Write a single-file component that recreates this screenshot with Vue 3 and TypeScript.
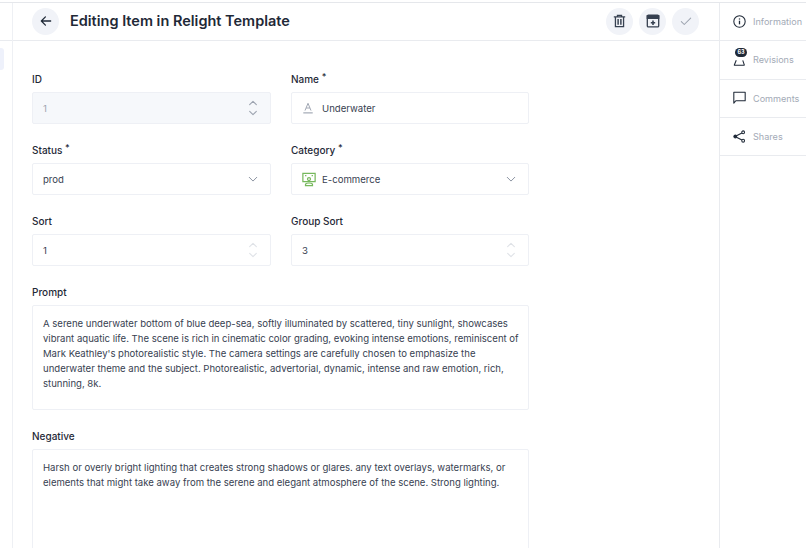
<template>
  <div class="page">
    <aside class="rail">
      <div class="rail-head"></div>
      <span class="rail-tab"></span>
    </aside>

    <main class="main">
      <header class="topbar">
        <button class="round-btn" aria-label="Back">
          <svg viewBox="0 0 24 24" width="14" height="14" fill="none" stroke="#1f2937" stroke-width="2.2" stroke-linecap="round" stroke-linejoin="round">
            <path d="M20 12H4M11 5l-7 7 7 7" />
          </svg>
        </button>
        <h1 class="title">Editing Item in Relight Template</h1>
        <div class="actions">
          <button class="round-btn" aria-label="Delete">
            <svg viewBox="0 0 16 16" width="13" height="14" fill="none" stroke="#374151" stroke-width="1.6">
              <path d="M1 3h14M5.500 3V1h5v2M3 3v12h10V3" />
              <path d="M6.300 5.500v7M9.700 5.500v7" stroke-width="1.800" />
            </svg>
          </button>
          <button class="round-btn" aria-label="Save">
            <svg viewBox="0 0 16 16" width="14" height="14" fill="none" stroke="#374151" stroke-width="1.500">
              <rect x="1.500" y="1.200" width="13" height="13.600" rx="1.200" />
              <path d="M1.500 2h13v3h-13z" fill="#374151" />
              <path d="M8 7.500v5M5.500 10h5" stroke-width="1.800" />
            </svg>
          </button>
          <button class="round-btn" aria-label="Confirm">
            <svg viewBox="0 0 24 24" width="14" height="14" fill="none" stroke="#9ca3af" stroke-width="1.800" stroke-linecap="round" stroke-linejoin="round">
              <path d="M4 13l5 5L20 7" />
            </svg>
          </button>
        </div>
      </header>

      <form class="form" @submit.prevent>
        <div class="field">
          <label>ID</label>
          <div class="control disabled">
            <span class="value">1</span>
            <svg viewBox="0 0 12 20" width="10" height="18" fill="none" stroke="#9ca3af" stroke-width="1.300" stroke-linecap="round" stroke-linejoin="round">
              <path d="M2 6l4-4 4 4M2 14l4 4 4-4" />
            </svg>
          </div>
        </div>
        <div class="field">
          <label>Name <sup>*</sup></label>
          <div class="control">
            <svg class="lead" viewBox="0 0 14 14" width="12" height="12" fill="none" stroke="#9ca3af" stroke-width="1.100">
              <path d="M3.500 10L7 1.500 10.500 10M4.800 7h4.400" />
              <path d="M1.500 12.700h11" stroke-width="1.300" />
            </svg>
            <span class="value">Underwater</span>
          </div>
        </div>

        <div class="field">
          <label>Status <sup>*</sup></label>
          <div class="control">
            <span class="value">prod</span>
            <svg viewBox="0 0 12 12" width="10" height="10" fill="none" stroke="#8b93a1" stroke-width="1.200" stroke-linecap="round" stroke-linejoin="round">
              <path d="M1.500 4l4.500 4.500L10.500 4" />
            </svg>
          </div>
        </div>
        <div class="field">
          <label>Category <sup>*</sup></label>
          <div class="control">
            <svg class="lead-cat" viewBox="0 0 16 16" width="14" height="15" fill="none" stroke="#76b85c" stroke-width="1.400">
              <path d="M1 1h14v9.500H1z" />
              <circle cx="8" cy="7.500" r="1.700" />
              <path d="M4 15v-1.200c0-1 1-1.800 4-1.800s4 .8 4 1.800V15z" />
              <path d="M3.500 3.500h1.500M11 3.500h1.500" />
            </svg>
            <span class="value">E-commerce</span>
            <svg viewBox="0 0 12 12" width="10" height="10" fill="none" stroke="#8b93a1" stroke-width="1.200" stroke-linecap="round" stroke-linejoin="round">
              <path d="M1.500 4l4.500 4.500L10.500 4" />
            </svg>
          </div>
        </div>

        <div class="field">
          <label>Sort</label>
          <div class="control">
            <span class="value">1</span>
            <svg viewBox="0 0 12 20" width="10" height="18" fill="none" stroke="#dfe2e7" stroke-width="1.300" stroke-linecap="round" stroke-linejoin="round">
              <path d="M2 6l4-4 4 4M2 14l4 4 4-4" />
            </svg>
          </div>
        </div>
        <div class="field">
          <label>Group Sort</label>
          <div class="control">
            <span class="value">3</span>
            <svg viewBox="0 0 12 20" width="10" height="18" fill="none" stroke="#dfe2e7" stroke-width="1.300" stroke-linecap="round" stroke-linejoin="round">
              <path d="M2 6l4-4 4 4M2 14l4 4 4-4" />
            </svg>
          </div>
        </div>

        <div class="field wide">
          <label>Prompt</label>
          <div class="area">{{ prompt }}</div>
        </div>
        <div class="field wide">
          <label>Negative</label>
          <div class="area tall">{{ negative }}</div>
        </div>
      </form>
    </main>

    <nav class="side">
      <div v-for="tab in tabs" :key="tab.label" class="side-row">
        <span class="side-icon">
          <svg v-if="tab.icon === 'info'" viewBox="0 0 16 16" width="13" height="13" fill="none" stroke="#1f2937" stroke-width="1.300">
            <circle cx="8" cy="8" r="7" />
            <path d="M8 7v4.500" stroke-width="1.600" />
            <path d="M8 4.200v1.400" stroke-width="1.600" />
          </svg>
          <svg v-else-if="tab.icon === 'rev'" viewBox="0 0 16 16" width="13" height="13" fill="none" stroke="#1f2937" stroke-width="1.300">
            <path d="M1 15h13.500M1.500 15L4 9M12 9l2 6" />
          </svg>
          <svg v-else-if="tab.icon === 'chat'" viewBox="0 0 16 16" width="13" height="13" fill="none" stroke="#1f2937" stroke-width="1.300">
            <path d="M1 15V1.500h14V12H3.500L1 15z" stroke-linejoin="round" />
          </svg>
          <svg v-else viewBox="0 0 16 16" width="13" height="13" fill="none" stroke="#1f2937" stroke-width="1.300">
            <circle cx="12.500" cy="2.800" r="1.700" />
            <circle cx="12.500" cy="13.200" r="1.700" />
            <circle cx="2.800" cy="8" r="1.700" fill="#1f2937" />
            <path d="M4.300 7.100l6.700-3.500M4.300 8.900l6.700 3.500" />
          </svg>
          <span v-if="tab.badge" class="badge">{{ tab.badge }}</span>
        </span>
        <span class="side-label">{{ tab.label }}</span>
      </div>
    </nav>
  </div>
</template>

<script setup lang="ts">
interface SideTab {
  label: string
  icon: string
  badge?: string
}

const tabs: SideTab[] = [
  { label: 'Information', icon: 'info' },
  { label: 'Revisions', icon: 'rev', badge: '63' },
  { label: 'Comments', icon: 'chat' },
  { label: 'Shares', icon: 'share' },
]

const prompt =
  "A serene underwater bottom of blue deep-sea, softly illuminated by scattered, tiny sunlight, showcases vibrant aquatic life. The scene is rich in cinematic color grading, evoking intense emotions, reminiscent of Mark Keathley's photorealistic style. The camera settings are carefully chosen to emphasize the underwater theme and the subject. Photorealistic, advertorial, dynamic, intense and raw emotion, rich, stunning, 8k."

const negative =
  'Harsh or overly bright lighting that creates strong shadows or glares. any text overlays, watermarks, or elements that might take away from the serene and elegant atmosphere of the scene. Strong lighting.'
</script>

<style>
html,
body {
  margin: 0;
  background: #fff;
  overflow: hidden;
}
</style>

<style scoped>
.page {
  display: flex;
  width: 806px;
  height: 546px;
  margin-top: 2px;
  box-sizing: border-box;
  border-top: 1px solid #e5e7eb;
  font-family: Inter, 'Liberation Sans', sans-serif;
  color: #374151;
  overflow: hidden;
}
.rail {
  width: 13px;
  flex: none;
  box-sizing: border-box;
  border-right: 1px solid #eef0f4;
}
.rail-head {
  height: 37px;
  border-bottom: 1px solid #e9ebef;
  margin-bottom: 7px;
}
.rail-tab {
  display: block;
  width: 4px;
  height: 22px;
  background: #eef1fb;
  border-radius: 0 3px 3px 0;
}
.main {
  flex: 1;
  min-width: 0;
}
.topbar {
  height: 38px;
  box-sizing: border-box;
  display: flex;
  align-items: center;
  padding: 0 20px 1px 19px;
  border-bottom: 1px solid #e9ebef;
}
.round-btn {
  width: 27px;
  height: 27px;
  border: 0;
  padding: 0;
  border-radius: 50%;
  background: #f1f3f8;
  display: flex;
  align-items: center;
  justify-content: center;
}
.title {
  margin: 0 0 0 11px;
  font-size: 14.5px;
  line-height: 20px;
  font-weight: 600;
  color: #1f2937;
}
.actions {
  margin-left: auto;
  display: flex;
  gap: 6px;
}
.form {
  display: grid;
  grid-template-columns: 239px 238px;
  column-gap: 20px;
  row-gap: 19px;
  padding: 31px 0 0 19px;
}
.field label {
  display: block;
  font-size: 10px;
  line-height: 14px;
  font-weight: 500;
  color: #1f2937;
  margin-bottom: 6px;
}
.field sup {
  font-size: 9px;
  line-height: 0;
  vertical-align: 3px;
}
.control {
  height: 32px;
  box-sizing: border-box;
  display: flex;
  align-items: center;
  padding: 0 12px 0 10px;
  border: 1px solid #eef0f5;
  border-radius: 2px;
  font-size: 9.6px;
  color: #374151;
}
.control.disabled {
  background: #f6f8fb;
}
.control.disabled .value {
  color: #9ca3af;
}
.value {
  flex: 1;
}
.lead {
  margin-right: 8px;
}
.lead-cat {
  margin-right: 6px;
}
.wide {
  grid-column: 1 / 3;
  width: 497px;
}
.area {
  box-sizing: border-box;
  height: 105px;
  border: 1px solid #eef0f5;
  border-radius: 2px;
  padding: 10px 4px 10px 10px;
  font-size: 9.55px;
  line-height: 15px;
  color: #374151;
}
.area.tall {
  height: 140px;
}
.side {
  width: 87px;
  flex: none;
  box-sizing: border-box;
  border-left: 1px solid #e9ebef;
}
.side-row {
  height: 38.3px;
  box-sizing: border-box;
  border-bottom: 1px solid #e9ebef;
  display: flex;
  align-items: center;
  padding-left: 13px;
  gap: 6px;
}
.side-icon {
  position: relative;
  display: flex;
  width: 14px;
  height: 14px;
}
.side-label {
  font-size: 9.1px;
  color: #a3aab6;
}
.badge {
  position: absolute;
  left: 2px;
  top: -5px;
  width: 12px;
  height: 9px;
  border-radius: 5px;
  background: #1f2937;
  color: #fff;
  font-size: 5.5px;
  line-height: 9px;
  font-weight: 700;
  text-align: center;
}
</style>
